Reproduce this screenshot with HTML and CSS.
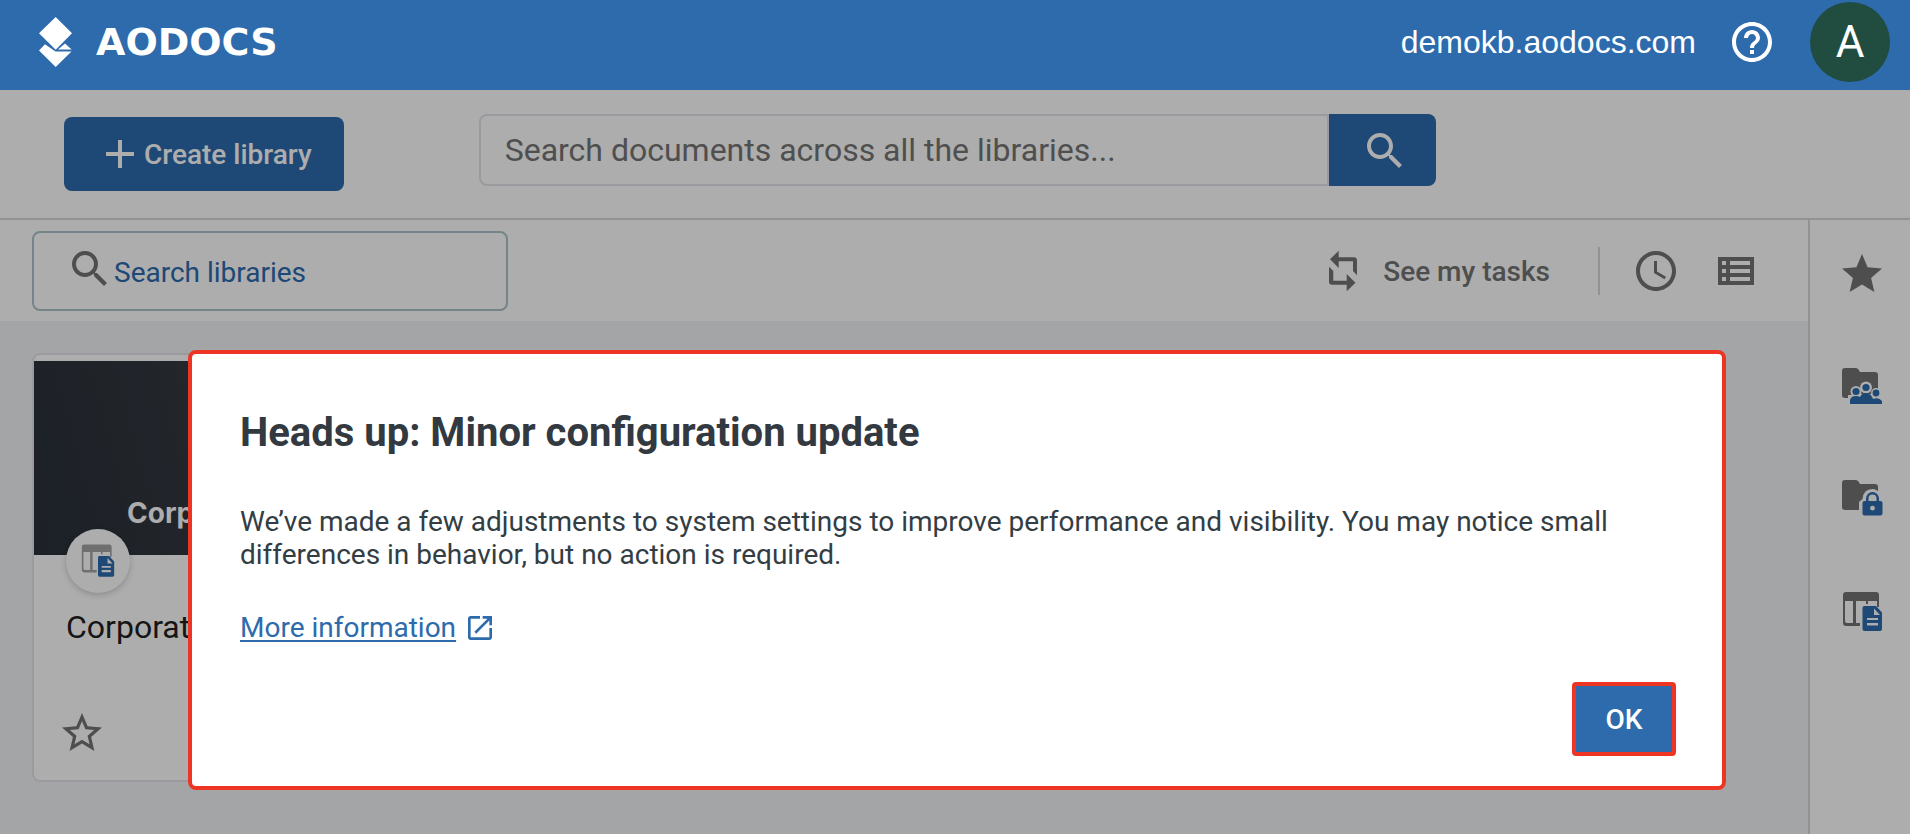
FILE: index.html
```html
<!DOCTYPE html>
<html lang="en">
<head>
  <meta charset="UTF-8" />
  <meta name="viewport" content="width=device-width, initial-scale=1.0" />
  <title>AODocs</title>
  <link rel="stylesheet" href="styles.css">
</head>
<body>
  <header class="header">
    <a href="#" class="logo">
      <svg class="logo-mark" viewBox="0 0 34 50" fill="currentColor">
        <path d="M16.7 0L33 16.3 16.7 32.7 0 16.3z"/>
        <path d="M6 27.2L16.5 34.5H32.5L16.7 50 0 33.4z"/>
        <path d="M26 26.6L32.7 32.6H19z"/>
      </svg>
      <span class="logo-text">AODOCS</span>
    </a>
    <div class="header-right">
      <span class="domain">demokb.aodocs.com</span>
      <button class="icon-btn help" aria-label="Help">
        <svg class="icon" viewBox="0 0 24 24"><path d="M11 18h2v-2h-2v2zm1-16C6.48 2 2 6.48 2 12s4.48 10 10 10 10-4.48 10-10S17.52 2 12 2zm0 18c-4.41 0-8-3.59-8-8s3.59-8 8-8 8 3.59 8 8-3.59 8-8 8zm0-14c-2.21 0-4 1.79-4 4h2c0-1.1.9-2 2-2s2 .9 2 2c0 2-3 1.75-3 5h2c0-2.25 3-2.5 3-5 0-2.21-1.79-4-4-4z"/></svg>
      </button>
      <button class="avatar">A</button>
    </div>
  </header>

  <main class="page">
    <div class="toolbar">
      <button class="btn-create">
        <svg class="plus" viewBox="0 0 28 28"><path d="M12 0h4v12h12v4H16v12h-4V16H0v-4h12z"/></svg>
        Create library
      </button>
      <form class="search">
        <input type="text" class="search-input" placeholder="Search documents across all the libraries..." aria-label="Search documents">
        <button type="button" class="search-btn" aria-label="Search">
          <svg class="icon" viewBox="0 0 24 24"><path d="M15.5 14h-.79l-.28-.27C15.41 12.59 16 11.11 16 9.5 16 5.91 13.09 3 9.5 3S3 5.91 3 9.5 5.91 16 9.5 16c1.61 0 3.09-.59 4.23-1.57l.27.28v.79l5 4.99L20.49 19l-4.99-5zm-6 0C7.01 14 5 11.99 5 9.5S7.01 5 9.5 5 14 7.01 14 9.5 11.99 14 9.5 14z"/></svg>
        </button>
      </form>
    </div>

    <div class="content">
      <section class="libraries">
        <div class="filter-bar">
          <label class="filter">
            <svg class="icon" viewBox="0 0 24 24"><path d="M15.5 14h-.79l-.28-.27C15.41 12.59 16 11.11 16 9.5 16 5.91 13.09 3 9.5 3S3 5.91 3 9.5 5.91 16 9.5 16c1.61 0 3.09-.59 4.23-1.57l.27.28v.79l5 4.99L20.49 19l-4.99-5zm-6 0C7.01 14 5 11.99 5 9.5S7.01 5 9.5 5 14 7.01 14 9.5 11.99 14 9.5 14z"/></svg>
            <input type="text" class="filter-input" placeholder="Search libraries" aria-label="Search libraries">
          </label>
          <div class="actions">
            <button class="tasks">
              <svg class="tasks-icon" viewBox="0 0 28 42"><path d="M1 9.3L9.7.7v6.6H25a3 3 0 0 1 3 3v15L24 21v-9.7H9.7V18z"/><path d="M0 16.7L4.3 21v9.7h13.4V24l8.8 8.7-8.8 8.6v-6.6H3a3 3 0 0 1-3-3z"/></svg>
              See my tasks
            </button>
            <span class="divider"></span>
            <button class="icon-btn" aria-label="Recent">
              <svg class="icon" viewBox="0 0 24 24"><path d="M11.99 2C6.47 2 2 6.48 2 12s4.47 10 9.99 10C17.52 22 22 17.52 22 12S17.52 2 11.99 2zM12 20c-4.42 0-8-3.58-8-8s3.58-8 8-8 8 3.58 8 8-3.58 8-8 8zm.5-13H11v6l5.250 3.150.750-1.230-4.500-2.670z"/></svg>
            </button>
            <button class="icon-btn" aria-label="List view">
              <svg class="icon" viewBox="0 0 24 24"><path d="M3 5v14h18V5H3zm4 2v2H5V7h2zm-2 6v-2h2v2H5zm0 2h2v2H5v-2zm14 2H9v-2h10v2zm0-4H9v-2h10v2zm0-4H9V7h10v2z"/></svg>
            </button>
          </div>
        </div>

        <div class="grid">
          <article class="card">
            <div class="card-image">
              <span class="card-image-text">Corporate</span>
              <span class="badge">
                <svg class="badge-icon" viewBox="0 0 41 40">
                  <path d="M4 0h30a3 3 0 0 1 3 3v12h-2V9h-9v3h-2V9H14v22h5v3H4a3 3 0 0 1-3-3V3a3 3 0 0 1 3-3zM3 9v20q0 2 2 2h6V9z"/>
                  <path class="blue" fill-rule="evenodd" d="M22 14h12l6 6.500V37a2 2 0 0 1-2 2H22.500a2 2 0 0 1-2-2V16a2 2 0 0 1 1.500-2zm10 2.500V23h6zM25 26v2h11v-2zm0 5v2.500h11V31z"/>
                </svg>
              </span>
            </div>
            <h2 class="card-title">Corporate</h2>
            <button class="icon-btn card-star" aria-label="Add to favorites">
              <svg class="icon" viewBox="0 0 24 24"><path d="M22 9.240l-7.190-.620L12 2 9.190 8.630 2 9.240l5.460 4.730L5.820 21 12 17.270 18.180 21l-1.630-7.030L22 9.240zM12 15.400l-3.760 2.270 1-4.280-3.320-2.880 4.380-.380L12 6.100l1.710 4.040 4.380.380-3.320 2.880 1 4.280L12 15.400z"/></svg>
            </button>
          </article>
        </div>
      </section>

      <nav class="sidebar">
        <a href="#" class="side-link" aria-label="Favorites">
          <svg class="icon" viewBox="0 0 24 24"><path d="M12 17.270L18.180 21l-1.640-7.030L22 9.240l-7.190-.610L12 2 9.190 8.630 2 9.240l5.460 4.730L5.820 21z"/></svg>
        </a>
        <a href="#" class="side-link" aria-label="Team folders">
          <svg class="icon" viewBox="-4 -6 48 48">
            <path d="M3 0h11q1.500 0 2.500 1.500L18 4h15a3 3 0 0 1 3 3v20H6v3H3a3 3 0 0 1-3-3V3a3 3 0 0 1 3-3z"/>
            <g class="cutout"><circle cx="14" cy="23.500" r="5.500"/><circle cx="24" cy="19.500" r="6"/><circle cx="34" cy="25" r="5"/><path d="M6 36v-6l5-4h26l4 4v6z"/></g>
            <g class="blue"><circle cx="14" cy="23.500" r="3.600"/><circle cx="24" cy="19.500" r="3.600"/><circle cx="34" cy="25" r="3.400"/><path d="M8 36v-4q1-4 6-4 2 0 4 1 2-4 6-4t6 4q1 1.500 1 2 6-2 9 2v3z"/></g>
          </svg>
        </a>
        <a href="#" class="side-link" aria-label="Secured folders">
          <svg class="icon" viewBox="-4 -6 48 48">
            <path d="M3 0h11q1.500 0 2.500 1.500L18 4h15a3 3 0 0 1 3 3v20H17v3H3a3 3 0 0 1-3-3V3a3 3 0 0 1 3-3z"/>
            <path class="cutout" d="M17 31V22l3.500-3q1-10 10-10 4 0 7 4v18z"/>
            <path class="blue" fill-rule="evenodd" d="M24 21v-2.500a6.500 6.500 0 0 1 13 0V21h1.500a2 2 0 0 1 2 2v10.500a2 2 0 0 1-2 2h-16a2 2 0 0 1-2-2V23a2 2 0 0 1 2-2zm2.500 0h8v-2.500a4 4 0 0 0-8 0zm4 4.800a2.400 2.400 0 1 0 0 4.800 2.400 2.400 0 0 0 0-4.800z"/>
          </svg>
        </a>
        <a href="#" class="side-link" aria-label="Document managers">
          <svg class="icon" viewBox="-4 -6 48 48">
            <path d="M4 0h30a3 3 0 0 1 3 3v12h-2V9h-9v3h-2V9H14v22h4v3H4a3 3 0 0 1-3-3V3a3 3 0 0 1 3-3zM3 9v20q0 2 2 2h6V9z"/>
            <path class="blue" fill-rule="evenodd" d="M22 14h12l6 6.500V37a2 2 0 0 1-2 2H22.500a2 2 0 0 1-2-2V16a2 2 0 0 1 1.500-2zm10 2.500V23h6zM25 26v2h11v-2zm0 5v2.500h11V31z"/>
          </svg>
        </a>
      </nav>
    </div>

    <div class="overlay">
      <div class="modal" role="dialog" aria-labelledby="modal-title">
        <h1 class="modal-title" id="modal-title">Heads up: Minor configuration update</h1>
        <p class="modal-text">We’ve made a few adjustments to system settings to improve performance and visibility. You may notice small differences in behavior, but no action is required.</p>
        <div class="modal-more">
          <a href="#" class="more-link">More information</a>
          <svg class="more-icon" viewBox="0 0 24 24"><path d="M19 19H5V5h7V3H5c-1.110 0-2 .9-2 2v14c0 1.100.890 2 2 2h14c1.100 0 2-.9 2-2v-7h-2v7zM14 3v2h3.590l-9.830 9.830 1.410 1.410L19 6.410V10h2V3h-7z"/></svg>
        </div>
        <button class="btn-ok">OK</button>
      </div>
    </div>
  </main>
</body>
</html>
```
FILE: styles.css
```css
* {
  box-sizing: border-box;
}
body {
  margin: 0;
  min-height: 100vh;
  display: flex;
  flex-direction: column;
  font-family: Roboto, sans-serif;
  font-size: 28px;
  background: #fff;
  color: #333;
}
button,
input {
  font: inherit;
  color: inherit;
}
button {
  border: none;
  padding: 0;
  background: none;
  cursor: pointer;
}
svg {
  display: block;
  flex-shrink: 0;
  fill: currentColor;
}
.icon {
  width: 48px;
  height: 48px;
}
.blue {
  fill: #2d6bad;
}
.cutout {
  fill: #fff;
}

/* header */
.header {
  display: flex;
  justify-content: space-between;
  align-items: center;
  height: 90px;
  padding: 0 20px 6px 39px;
  background: #2d6bad;
  color: #fff;
}
.logo {
  display: flex;
  align-items: center;
  gap: 23px;
  color: #fff;
  text-decoration: none;
}
.logo-mark {
  width: 34px;
  height: 50px;
}
.logo-text {
  font-family: "DejaVu Sans", sans-serif;
  font-weight: bold;
  font-size: 38px;
  line-height: 50px;
}
.header-right {
  display: flex;
  align-items: center;
}
.domain {
  font-family: "Liberation Sans", sans-serif;
  font-size: 32px;
}
.help {
  margin: 0 34px 0 32px;
}
.avatar {
  width: 80px;
  height: 80px;
  border-radius: 50%;
  background: #204d40;
  color: #fff;
  font-size: 44px;
}

/* top toolbar */
.page {
  position: relative;
  flex: 1;
  display: flex;
  flex-direction: column;
}
.toolbar {
  display: flex;
  gap: 135px;
  height: 130px;
  padding: 24px 64px 27px;
  border-bottom: 2px solid #d8d8d8;
}
.btn-create {
  display: flex;
  align-items: center;
  align-self: flex-end;
  gap: 10px;
  height: 74px;
  padding: 0 32px 0 42px;
  border-radius: 8px;
  background: #2d6bad;
  color: #fff;
  font-weight: 500;
}
.plus {
  width: 28px;
  height: 28px;
}
.search {
  display: flex;
  flex: 0 1 957px;
  height: 72px;
}
.search-input {
  flex: 1;
  min-width: 0;
  padding: 0 24px;
  border: 2px solid #e4e4ea;
  border-radius: 8px 0 0 8px;
  background: #fff;
  font-size: 32px;
}
.search-input::placeholder {
  color: #757575;
}
.search-btn {
  display: flex;
  align-items: center;
  padding: 2px 27px 0 32px;
  border-radius: 0 8px 8px 0;
  background: #2d6bad;
  color: #fff;
}

/* libraries */
.content {
  flex: 1;
  display: flex;
}
.libraries {
  flex: 1;
  background: #f1f4f7;
}
.filter-bar {
  display: flex;
  justify-content: space-between;
  align-items: center;
  padding: 11px 48px 10px 32px;
  background: #fff;
  color: #747474;
}
.filter {
  display: flex;
  align-items: center;
  width: 476px;
  height: 80px;
  padding: 0 32px;
  border: 2px solid #acc3cb;
  border-radius: 8px;
}
.filter .icon {
  margin-bottom: 4px;
}
.filter-input {
  flex: 1;
  min-width: 0;
  border: none;
  padding: 2px 0 0;
  background: none;
}
.filter-input::placeholder {
  color: #2d6bad;
}
.actions {
  display: flex;
  align-items: center;
  gap: 32px;
}
.tasks {
  display: flex;
  align-items: center;
  gap: 26px;
  margin-right: 16px;
  font-weight: 500;
}
.tasks-icon {
  width: 28px;
  height: 42px;
}
.icon-btn {
  display: block;
}
.divider {
  width: 2px;
  height: 48px;
  background: #d8d8d8;
}
.grid {
  display: grid;
  grid-template-columns: repeat(auto-fill, 476px);
  gap: 32px;
  padding: 32px;
}
.card {
  padding-top: 6px;
  border: 2px solid #e4e4ea;
  border-radius: 8px;
  background: #fff;
}
.card-image {
  position: relative;
  display: flex;
  align-items: flex-end;
  height: 194px;
  padding: 0 93px 25px;
  background: linear-gradient(75deg, #2a303a, #373b41 50%, #44484e);
}
.card-image-text {
  font-family: Inter, sans-serif;
  font-weight: 700;
  color: #fff;
}
.badge {
  position: absolute;
  left: 32px;
  bottom: -38px;
  display: flex;
  align-items: center;
  justify-content: center;
  width: 64px;
  height: 64px;
  border-radius: 50%;
  background: #fff;
  box-shadow: 0 2px 6px rgba(0, 0, 0, 0.2);
  color: #a4a4a4;
}
.badge-icon {
  width: 34px;
  height: 34px;
}
.card-title {
  margin: 52px 32px 0;
  font-size: 32px;
  font-weight: 400;
  line-height: 40px;
  color: #1f1f1f;
}
.card-star {
  margin: 62px 24px 23px;
  color: #747474;
}

/* right sidebar */
.sidebar {
  display: flex;
  flex-direction: column;
  gap: 64px;
  width: 102px;
  padding: 30px 28px;
  border-left: 2px solid #d8d8d8;
  background: #fff;
}
.side-link {
  color: #747474;
}

/* modal */
.overlay {
  position: absolute;
  inset: 0;
  padding: 260px 184px 44px 188px;
  background: rgba(0, 0, 0, 0.32);
}
.modal {
  display: flex;
  flex-direction: column;
  padding: 55px 46px 30px 48px;
  border: 4px solid #ee3524;
  border-radius: 8px;
  background: #fff;
}
.modal-title {
  margin: 0;
  font-size: 40px;
  font-weight: 700;
  line-height: 48px;
  color: #333940;
}
.modal-text {
  margin: 48px 0 40px;
  line-height: 33px;
  color: #333d44;
}
.modal-more {
  display: flex;
  align-items: center;
  gap: 8px;
  line-height: 33px;
  color: #2d6bad;
}
.more-link {
  color: #2d6bad;
  text-underline-offset: 3px;
  text-decoration-thickness: 2px;
}
.more-icon {
  width: 32px;
  height: 32px;
}
.btn-ok {
  align-self: flex-end;
  width: 104px;
  height: 74px;
  margin-top: 38px;
  border: 4px solid #ee3524;
  border-radius: 4px;
  background: #2d6bad;
  color: #fff;
  font-weight: 500;
}
```
